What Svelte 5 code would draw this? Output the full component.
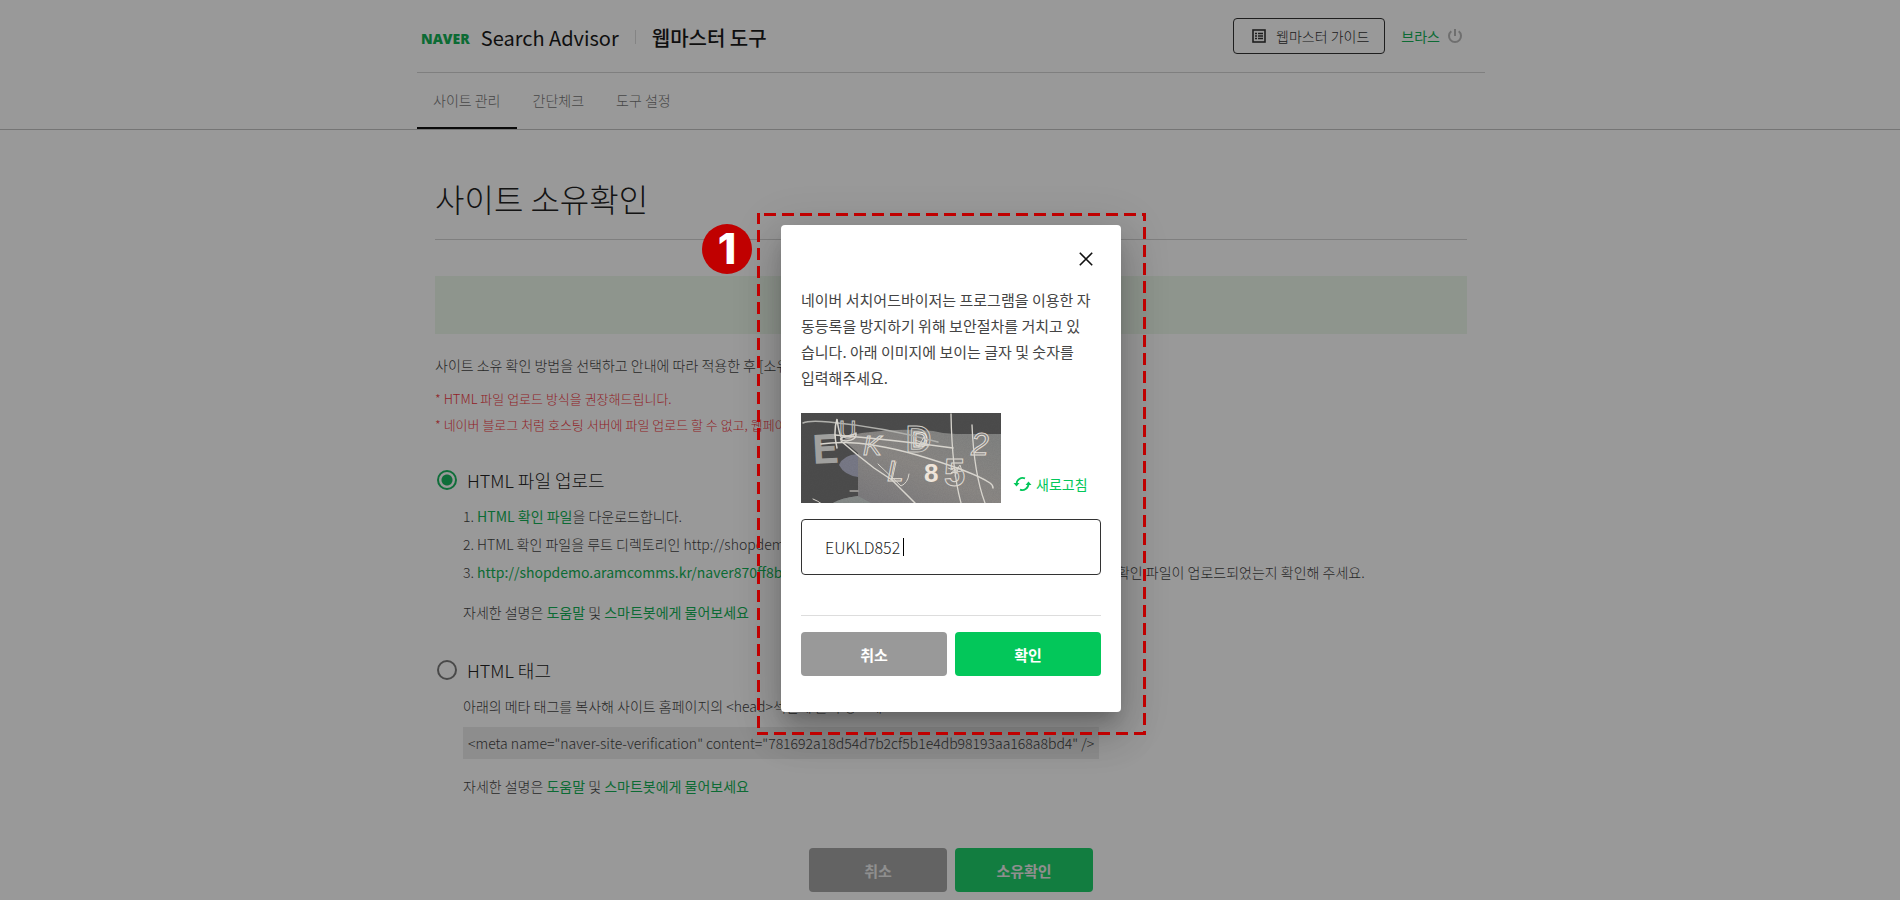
<script>
  let method = $state('file');
  let answer = $state('EUKLD852');
  const tabs = ['사이트 관리', '간단체크', '도구 설정'];
  const message = [
    '네이버 서치어드바이저는 프로그램을 이용한 자',
    '동등록을 방지하기 위해 보안절차를 거치고 있',
    '습니다. 아래 이미지에 보이는 글자 및 숫자를',
    '입력해주세요.'
  ];
</script>

<div class="page">
  <header>
    <div class="container">
      <div class="brand-row">
        <div class="brand">
          <a class="naver" href="#naver">NAVER</a>
          <a class="product" href="#advisor">Search Advisor</a>
          <span class="bar"></span>
          <a class="product tool" href="#tools">웹마스터 도구</a>
        </div>
        <div class="account">
          <button class="guide">
            <svg width="14" height="14" viewBox="0 0 14 14" aria-hidden="true">
              <rect x="1" y="1" width="12" height="12" fill="none" stroke="currentColor" stroke-width="1.6" />
              <path d="M3 4.500h2M3 7h2M3 9.500h2M6 4.500h5M6 7h5M6 9.500h5" stroke="currentColor" stroke-width="1.400" />
            </svg>
            웹마스터 가이드
          </button>
          <a class="user" href="#user">브라스</a>
          <button class="power" aria-label="로그아웃">
            <svg width="16" height="16" viewBox="0 0 16 16" aria-hidden="true">
              <path d="M8 1v7M4.300 3.300a6 6 0 1 0 7.400 0" fill="none" stroke="currentColor" stroke-width="2" />
            </svg>
          </button>
        </div>
      </div>
      <nav>
        {#each tabs as tab, i}
          <a href="#tab{i}" class:active={i === 0}>{tab}</a>
        {/each}
      </nav>
    </div>
  </header>

  <main class="container">
    <h1>사이트 소유확인</h1>
    <div class="notice"></div>
    <p class="intro">사이트 소유 확인 방법을 선택하고 안내에 따라 적용한 후 [소유확인] 버튼을 클릭해주세요.</p>
    <p class="warn">* HTML 파일 업로드 방식을 권장해드립니다.</p>
    <p class="warn">* 네이버 블로그 처럼 호스팅 서버에 파일 업로드 할 수 없고, 웹페이지 편집만 가능한 경우에는 HTML 태그 방식으로 이용해 주세요.</p>

    <section>
      <label class="choice"><input type="radio" name="method" value="file" bind:group={method} />HTML 파일 업로드</label>
      <div class="detail">
        <p>1. <a href="#file">HTML 확인 파일</a>을 다운로드합니다.</p>
        <p>2. HTML 확인 파일을 루트 디렉토리인 http://shopdemo.aramcomms.kr/ 에 업로드합니다.</p>
        <p>3. <a href="#check">http://shopdemo.aramcomms.kr/naver870ff8b2c41d7e95a3f60b7.html</a>에 접속하여 정상적으로 HTML 확인 파일이 업로드되었는지 확인해 주세요.</p>
        <p class="more">자세한 설명은 <a href="#help">도움말</a> 및 <a href="#bot">스마트봇에게 물어보세요</a></p>
      </div>
    </section>

    <section class="second">
      <label class="choice"><input type="radio" name="method" value="tag" bind:group={method} />HTML 태그</label>
      <div class="detail">
        <p>아래의 메타 태그를 복사해 사이트 홈페이지의 &lt;head&gt;섹션에 붙여 넣으세요</p>
        <code>&lt;meta name="naver-site-verification" content="781692a18d54d7b2cf5b1e4db98193aa168a8bd4" /&gt;</code>
        <p>자세한 설명은 <a href="#help2">도움말</a> 및 <a href="#bot2">스마트봇에게 물어보세요</a></p>
      </div>
    </section>

    <div class="actions">
      <button class="btn muted">취소</button>
      <button class="btn primary">소유확인</button>
    </div>
  </main>

  <div class="overlay">
    <div class="dialog" role="dialog" aria-modal="true" aria-label="보안절차">
      <button class="close" aria-label="닫기">
        <svg width="14" height="14" viewBox="0 0 14 14" aria-hidden="true">
          <path d="M.8.8l12.400 12.400M13.200.8L.8 13.200" stroke="currentColor" stroke-width="1.600" />
        </svg>
      </button>
      <p class="message">{#each message as line}<span>{line}</span>{/each}</p>
      <div class="captcha">
        <svg width="200" height="90" viewBox="0 0 200 90" role="img" aria-label="보안 이미지">
          <defs>
            <linearGradient id="ground" x1="0" y1="1" x2="1" y2="0">
              <stop offset="0" stop-color="#77767a" />
              <stop offset=".5" stop-color="#8a8784" />
              <stop offset="1" stop-color="#7f8180" />
            </linearGradient>
            <filter id="grain" x="0" y="0" width="100%" height="100%">
              <feTurbulence type="fractalNoise" baseFrequency=".8" numOctaves="2" />
              <feColorMatrix values="0 0 0 0 .1  0 0 0 0 .1  0 0 0 0 .1  .7 0 0 0 -.2" />
            </filter>
          </defs>
          <rect width="200" height="90" fill="#4a4a4a" />
          <path d="M42 27Q50 20 70 19Q100 15 132 18Q143 21 155 21H200V90H32Q40 85 57 83V40Z" fill="url(#ground)" />
          <path d="M57 41Q42 42 38 52Q43 62 57 64Z" fill="#777886" />
          <path d="M32 90Q40 85 57 83L70 90Z" fill="#858a88" />
          <rect width="200" height="90" filter="url(#grain)" opacity=".35" />
          <g font-family="'Liberation Sans', Arial, sans-serif">
            <text x="12" y="51" font-size="44" font-family="'Liberation Mono', monospace" font-weight="bold" fill="#a0a09e" transform="rotate(-3 12 51)">E</text>
            <text x="38" y="25" font-size="24" fill="none" stroke="#c6c5c2">U</text>
            <text x="62" y="42" font-size="28" font-style="italic" fill="none" stroke="#dedbd5">K</text>
            <text x="104" y="39" font-size="37" fill="none" stroke="#cdccc7">D</text>
            <text x="111" y="34" font-size="22" fill="none" stroke="#eeeae3">D</text>
            <text x="170" y="42" font-size="32" font-style="italic" fill="none" stroke="#e1ddd6">2</text>
            <text x="86" y="68" font-size="30" font-style="italic" fill="none" stroke="#e6dfd5">L</text>
            <text x="123" y="69" font-size="26" font-weight="bold" fill="#eee4d9">8</text>
            <text x="143" y="73" font-size="38" font-weight="bold" fill="none" stroke="#ded9d2">5</text>
          </g>
          <g fill="none" stroke="#d8d5ce" stroke-linecap="round">
            <path d="M2 10Q8 7 28 9Q82 14 137 29" stroke="#b0b0ac" stroke-width="1.500" />
            <path d="M34 22Q95 27 152 35" stroke-width="1.500" />
            <path d="M20 31Q58 25 116 42Q173 59 189 70Q192 72 192 75" stroke-width="1.500" />
            <path d="M40 28Q56 42 73 55L91 67L114 90" stroke-width="1.500" />
            <path d="M150 1Q151 57 160 90M171 12Q173 61 184 90" stroke-width="1.300" />
            <path d="M77 51L100 73Q107 70 108 61M95 49L91 67M49 78h8M12 86q5 2 9 5" />
            <path d="M55 20Q56 27 45 28Q36 27 42 24Q53 22 55 20M36 35q-4-16 0-29q2 15 5 20" stroke-width="1.500" />
            <path d="M147 55l8 3 4-6 2 6-11 2 8-6-4 9M114 27l11 4-8 3 6-10 4 9-12-3" />
          </g>
        </svg>
        <button class="refresh">
          <svg width="19" height="16" viewBox="0 0 19 16" aria-hidden="true">
            <path d="M12 2.400A6.200 6.200 0 0 0 3.500 8M7 13.600A6.200 6.200 0 0 0 15.500 8" fill="none" stroke="currentColor" stroke-width="1.800" />
            <path d="M.5 7h6L3.500 10.500zM12.500 9h6L15.500 5.500z" fill="currentColor" />
          </svg>
          새로고침
        </button>
      </div>
      <div class="field">
        <input type="text" aria-label="글자 및 숫자" bind:value={answer} />
        <span class="caret"></span>
      </div>
      <div class="dialog-actions">
        <button class="btn gray">취소</button>
        <button class="btn green">확인</button>
      </div>

      <svg class="outline" width="389" height="522" viewBox="0 0 389 522" fill="none" stroke="#c00000" stroke-width="3" stroke-dasharray="12 6" aria-hidden="true">
        <path d="M0 1.500H389" stroke-dashoffset="11" />
        <path d="M387.500 0V522" stroke-dashoffset="4" />
        <path d="M0 520.500H389" stroke-dashoffset="1" />
        <path d="M1.500 0V522" stroke-dashoffset="1" />
      </svg>
      <span class="step">1</span>
    </div>
  </div>
</div>

<style>
  :global(body) {
    margin: 0;
    background: #fff;
  }
  .page {
    position: relative;
    min-height: 100vh;
    box-sizing: border-box;
    overflow: hidden;
    font-family: 'Noto Sans CJK KR', sans-serif;
    font-size: 14px;
    font-weight: 300;
    color: #444;
  }
  button {
    font: inherit;
    color: inherit;
    background: none;
    border: 0;
    padding: 0;
    cursor: pointer;
  }
  a {
    color: #14b257;
    text-decoration: none;
    font-weight: 400;
  }
  p {
    margin: 0;
    white-space: nowrap;
  }
  header {
    padding-left: 2px;
    border-bottom: 1px solid #c4c4c4;
  }
  .container {
    max-width: 1068px;
    margin: 0 auto;
  }
  .brand-row {
    display: flex;
    justify-content: space-between;
    height: 72px;
    border-bottom: 1px solid #d4d4d4;
  }
  .brand {
    display: flex;
    align-items: center;
    padding: 2px 0 0 4px;
  }
  .naver {
    font: 800 14px/20px 'Open Sans', sans-serif;
    color: #14b257;
    margin-right: 11px;
    padding-top: 4px;
  }
  .product {
    font-size: 20px;
    font-weight: 400;
    color: #1a1a1a;
  }
  .tool {
    font-weight: 500;
  }
  .bar {
    width: 1px;
    height: 14px;
    margin: 0 16px;
    background: #dcdcdc;
  }
  .account {
    display: flex;
    align-items: center;
    padding: 0 22px 0 0;
  }
  .guide {
    display: flex;
    align-items: center;
    gap: 10px;
    height: 36px;
    padding: 0 15px 0 18px;
    margin-right: 16px;
    border: 1px solid #333;
    border-radius: 4px;
    color: #333;
  }
  .power {
    display: flex;
    margin-left: 7px;
    color: #b9b9b9;
  }
  nav {
    display: flex;
    height: 56px;
  }
  nav a {
    padding: 0 16px;
    line-height: 54px;
    font-weight: 300;
    color: #777;
    border-bottom: 2px solid transparent;
  }
  nav a.active {
    border-color: #111;
  }
  main {
    box-sizing: border-box;
    padding: 44px 17px 8px 19px;
  }
  h1 {
    margin: 0;
    height: 65px;
    font-size: 32px;
    line-height: 48px;
    font-weight: 300;
    color: #222;
    border-bottom: 1px solid #d4d4d4;
  }
  .notice {
    height: 58px;
    margin: 36px 0 20px;
    background: #edf9eb;
  }
  .intro {
    line-height: 22px;
    margin-bottom: 10px;
  }
  .warn {
    font-size: 13px;
    line-height: 26px;
    color: #f2383f;
  }
  section {
    margin-top: 27px;
  }
  .second {
    margin-top: 29px;
  }
  .choice {
    display: flex;
    align-items: center;
    gap: 10px;
    height: 30px;
    font-size: 18px;
    color: #222;
  }
  .choice input {
    appearance: none;
    box-sizing: border-box;
    width: 20px;
    height: 20px;
    margin: 0 0 0 2px;
    border: 2px solid #7b7b7b;
    border-radius: 50%;
  }
  .choice input:checked {
    border-color: #1ab861;
    background: radial-gradient(circle, #1ab861 5px, transparent 6px);
  }
  .detail {
    display: flex;
    flex-direction: column;
    align-items: flex-start;
    padding: 7px 0 0 28px;
    line-height: 28px;
  }
  .more {
    margin-top: 12px;
  }
  code {
    padding: 0 5px;
    margin: 7px 0 13px;
    font: inherit;
    line-height: 32px;
    white-space: nowrap;
    background: #ebebeb;
  }
  .btn {
    height: 44px;
    border-radius: 4px;
    font-size: 15px;
    font-weight: 700;
    color: #fff;
  }
  .actions {
    display: grid;
    grid-template-columns: 138px 138px;
    justify-content: center;
    gap: 8px;
    margin-top: 48px;
  }
  .muted {
    background: #a5a5a5;
    color: #eee;
  }
  .primary {
    background: #1ed06b;
    color: #eee;
  }
  .overlay {
    position: absolute;
    inset: 0;
    display: flex;
    justify-content: center;
    align-items: flex-start;
    padding: 225px 0 0 2px;
    background: rgba(0, 0, 0, 0.4);
  }
  .dialog {
    position: relative;
    display: flex;
    flex-direction: column;
    box-sizing: border-box;
    width: 340px;
    padding: 19px 20px 36px;
    border-radius: 4px;
    background: #fff;
    color: #333;
    box-shadow:
      0 11px 15px -7px rgba(0, 0, 0, 0.2),
      0 24px 38px 3px rgba(0, 0, 0, 0.14),
      0 9px 46px 8px rgba(0, 0, 0, 0.12);
  }
  .close {
    display: grid;
    place-items: center;
    align-self: flex-end;
    width: 30px;
    height: 30px;
    color: #111;
  }
  .message {
    display: flex;
    flex-direction: column;
    margin: 13px 0 22px;
    font-size: 15px;
    line-height: 26px;
    font-weight: 400;
    color: #444;
  }
  .captcha {
    display: flex;
    align-items: flex-end;
    gap: 12px;
  }
  .refresh {
    display: flex;
    align-items: center;
    gap: 4px;
    height: 38px;
    font-weight: 400;
    color: #03c75a;
  }
  .field {
    position: relative;
    display: flex;
    margin: 16px 0 40px;
  }
  .field input {
    box-sizing: border-box;
    width: 100%;
    height: 56px;
    padding: 0 23px;
    border: 1px solid #333;
    border-radius: 4px;
    outline: 0;
    background: #fff;
    font: inherit;
    font-size: 16px;
    color: #222;
  }
  .caret {
    position: absolute;
    left: 102px;
    top: 19px;
    width: 1px;
    height: 18px;
    background: #000;
  }
  .dialog-actions {
    display: grid;
    grid-template-columns: 1fr 1fr;
    gap: 8px;
    padding-top: 16px;
    border-top: 1px solid #ddd;
  }
  .gray {
    background: #999;
  }
  .green {
    background: #03c75a;
  }
  .outline {
    position: absolute;
    left: -24px;
    top: -12px;
    pointer-events: none;
  }
  .step {
    position: absolute;
    left: -79px;
    top: -1px;
    width: 50px;
    height: 50px;
    border-radius: 50%;
    background: #c00000;
    color: #fff;
    font: 800 42px/50px Inter, sans-serif;
    text-align: center;
  }
</style>
